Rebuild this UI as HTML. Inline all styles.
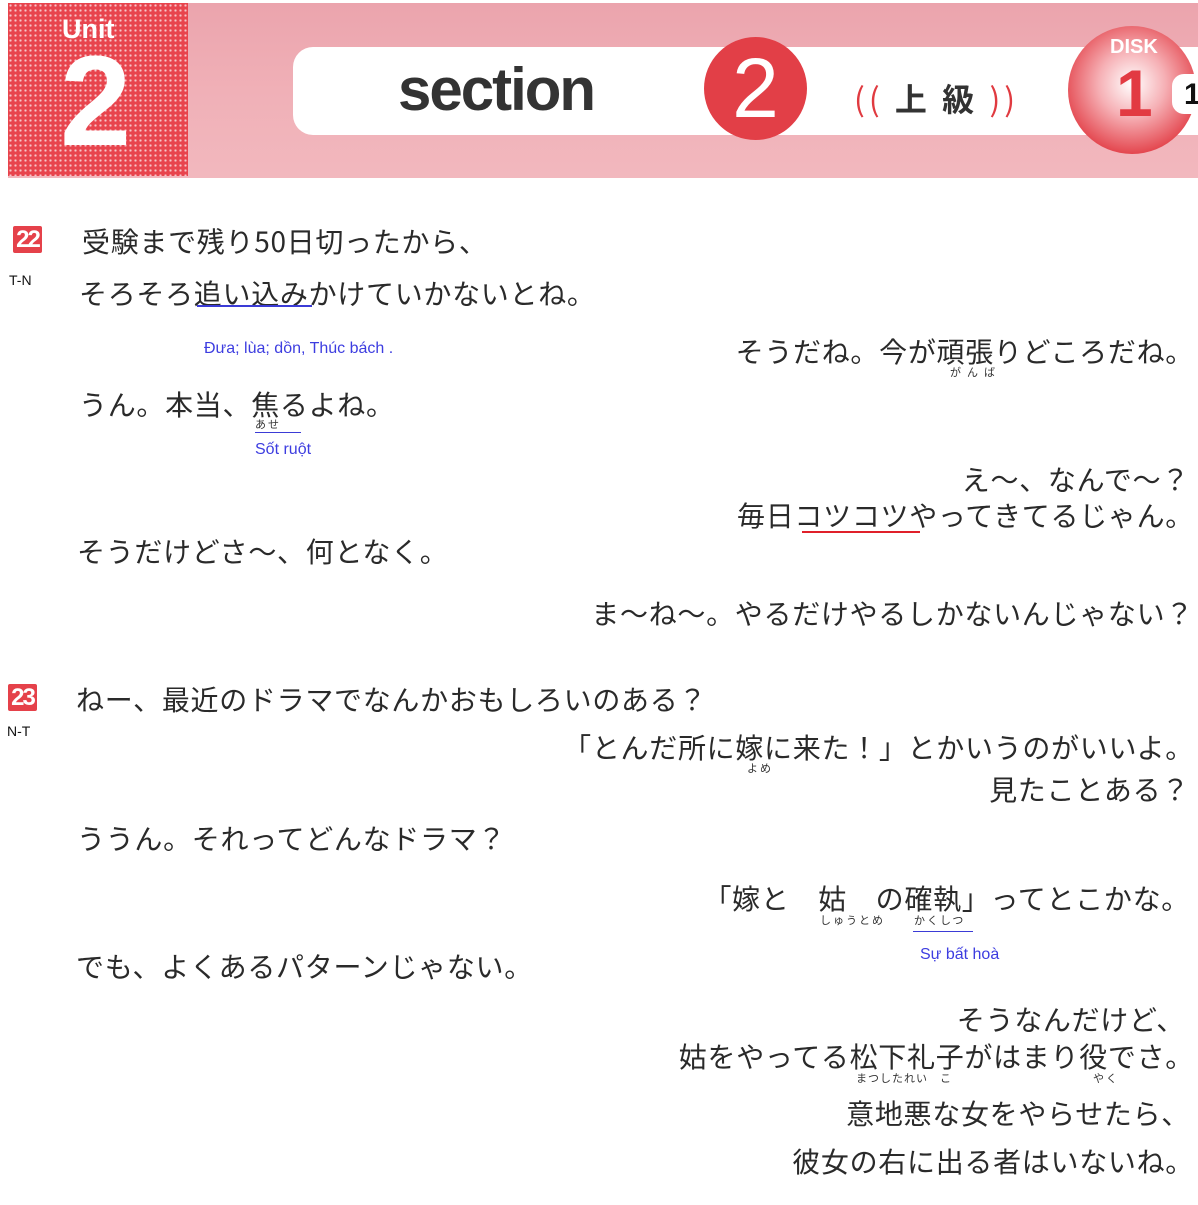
<!DOCTYPE html>
<html><head><meta charset="utf-8"><style>
body{margin:0;width:1198px;height:1205px;background:#fff;position:relative;overflow:hidden;font-family:"Liberation Sans","Noto Sans CJK JP",sans-serif;color:#2a2a2a}
.t{position:absolute;font-size:28px;line-height:30px;white-space:nowrap;font-family:"Noto Sans CJK JP","Liberation Sans",sans-serif;letter-spacing:0.7px}
.r{right:4px}
.rb{position:absolute;font-size:11px;line-height:12px;white-space:nowrap;font-family:"Noto Sans CJK JP",sans-serif;color:#333;letter-spacing:2px}
.vn{position:absolute;font-size:16px;line-height:17px;color:#3d3de0;white-space:nowrap}
.ul{position:absolute;height:2px;background:#3b3bd6}
.lab{position:absolute;font-size:14px;color:#111}
.badge{position:absolute;width:29px;height:27px;background:#e5414a;color:#fff;font:bold 24px/27px "Liberation Sans",sans-serif;text-align:center;letter-spacing:-2px;border-radius:2px}
</style></head><body>
<div style="position:absolute;left:8px;top:3px;width:1190px;height:175px;background:linear-gradient(#eba4ad,#f0b0b7 50%,#f2b8be)"></div>
<div style="position:absolute;left:8px;top:3px;width:180px;height:173px;background-color:#e8444d;background-image:radial-gradient(circle,#f7c5c8 1px,transparent 1.3px);background-size:5px 5px"></div>
<div style="position:absolute;left:62px;top:14px;font:bold 27px 'Liberation Sans',sans-serif;color:#fff">Unit</div>
<div style="position:absolute;left:60px;top:38px;font:bold 128px/128px 'Liberation Sans',sans-serif;color:#fff">2</div>
<div style="position:absolute;left:293px;top:47px;width:905px;height:88px;background:#fff;border-radius:20px 0 0 20px"></div>
<div style="position:absolute;left:398px;top:50px;font:bold 60px/80px 'Liberation Sans',sans-serif;color:#333;letter-spacing:-2px">section</div>
<div style="position:absolute;left:704px;top:37px;width:103px;height:103px;border-radius:50%;background:#e23f47"></div>
<div style="position:absolute;left:704px;top:37px;width:103px;line-height:103px;text-align:center;font:84px/103px 'Liberation Sans',sans-serif;color:#fff">2</div>
<div style="position:absolute;left:854px;top:78px;font:bold 32px/40px 'Noto Sans CJK JP',sans-serif;color:#333;white-space:nowrap;letter-spacing:4px"><span style="color:#e03a40;font-weight:normal">((</span> 上 級 <span style="color:#e03a40;font-weight:normal">))</span></div>
<div style="position:absolute;left:1068px;top:26px;width:128px;height:128px;border-radius:50%;background:radial-gradient(circle at 50% 45%,#fff 0,#f6b0b5 35%,#e3434b 75%)"></div>
<div style="position:absolute;left:1110px;top:36px;font:bold 20px 'Liberation Sans',sans-serif;color:#fff">DISK</div>
<div style="position:absolute;left:1116px;top:58px;font:bold 66px/70px 'Liberation Sans',sans-serif;color:#e23a42">1</div>
<div style="position:absolute;left:1172px;top:74px;width:30px;height:40px;background:#fff;border-radius:12px 0 0 12px"></div>
<div style="position:absolute;left:1184px;top:78px;font:bold 30px/34px 'Liberation Sans',sans-serif;color:#111">1</div>

<div class="badge" style="left:13px;top:226px">22</div>
<div class="lab" style="left:9px;top:272px">T-N</div>
<div class="t" style="left:82px;top:226px">受験まで残り50日切ったから、</div>
<div class="t" style="left:79px;top:278px">そろそろ追い込みかけていかないとね。</div>
<div class="ul" style="left:197px;top:305px;width:115px"></div>
<div class="vn" style="left:204px;top:340px">Đưa; lùa; dồn, Thúc bách .</div>
<div class="t r" style="top:336px">そうだね。今が頑張りどころだね。</div>
<div class="rb" style="left:950px;top:366px;letter-spacing:6px">がんば</div>
<div class="t" style="left:79px;top:389px">うん。本当、焦るよね。</div>
<div class="rb" style="left:255px;top:418px">あせ</div>
<div class="ul" style="left:255px;top:432px;width:46px;height:1px"></div>
<div class="vn" style="left:255px;top:441px">Sốt ruột</div>
<div class="t r" style="top:464px;right:8px">え～、なんで～？</div>
<div class="t r" style="top:500px">毎日コツコツやってきてるじゃん。</div>
<div style="position:absolute;left:802px;top:531px;width:118px;height:2px;background:#e0202a"></div>
<div class="t" style="left:77px;top:536px">そうだけどさ～、何となく。</div>
<div class="t r" style="top:598px">ま～ね～。やるだけやるしかないんじゃない？</div>

<div class="badge" style="left:8px;top:684px">23</div>
<div class="lab" style="left:7px;top:723px">N-T</div>
<div class="t" style="left:76px;top:684px">ねー、最近のドラマでなんかおもしろいのある？</div>
<div class="t r" style="top:732px">「とんだ所に嫁に来た！」とかいうのがいいよ。</div>
<div class="rb" style="left:747px;top:762px">よめ</div>
<div class="t r" style="top:774px;right:8px">見たことある？</div>
<div class="t" style="left:77px;top:823px">ううん。それってどんなドラマ？</div>
<div class="t r" style="top:883px;right:8px">「嫁と　姑　の確執」ってとこかな。</div>
<div class="rb" style="left:820px;top:914px">しゅうとめ</div>
<div class="rb" style="left:914px;top:914px">かくしつ</div>
<div class="ul" style="left:913px;top:931px;width:60px;height:1px"></div>
<div class="vn" style="left:920px;top:946px">Sự bất hoà</div>
<div class="t" style="left:76px;top:951px">でも、よくあるパターンじゃない。</div>
<div class="t r" style="top:1004px;right:13px">そうなんだけど、</div>
<div class="t r" style="top:1041px">姑をやってる松下礼子がはまり役でさ。</div>
<div class="rb" style="left:856px;top:1072px;letter-spacing:1px">まつしたれい　こ</div>
<div class="rb" style="left:1093px;top:1072px">やく</div>
<div class="t r" style="top:1098px;right:8px">意地悪な女をやらせたら、</div>
<div class="t r" style="top:1146px">彼女の右に出る者はいないね。</div>
</body></html>
